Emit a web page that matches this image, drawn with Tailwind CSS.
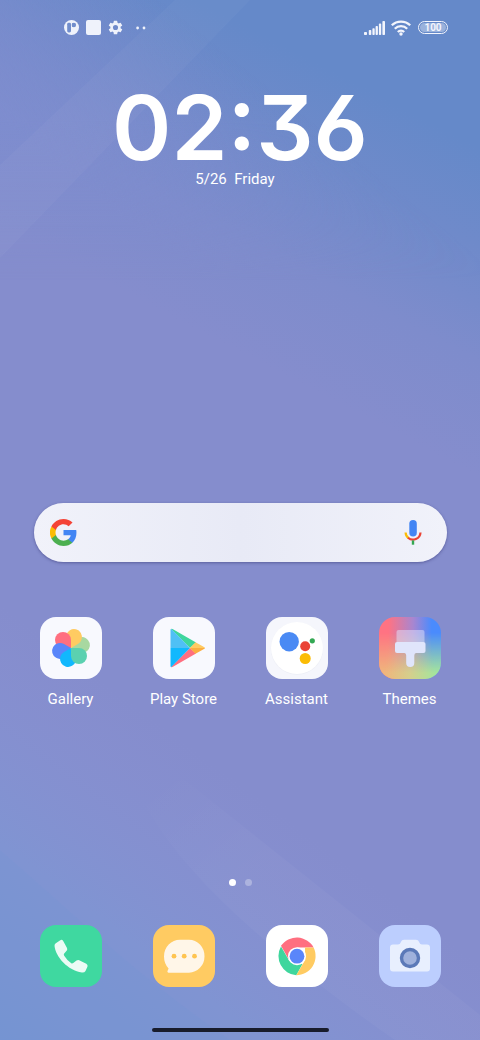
<!DOCTYPE html>
<html lang="en">
<head>
  <meta charset="UTF-8">
  <meta name="viewport" content="width=device-width, initial-scale=1.0">
  <title>Home Screen</title>
  <script src="https://cdn.jsdelivr.net/npm/@tailwindcss/browser@4"></script>
</head>
<body class="bg-[#868dcf] font-['Roboto',sans-serif] text-white">
  <div class="relative isolate flex min-h-screen flex-col overflow-hidden">

    <!-- Wallpaper -->
    <svg class="absolute inset-0 -z-10 h-full w-full" viewBox="0 0 480 1040" preserveAspectRatio="none" aria-hidden="true">
      <defs>
        <linearGradient id="sky" gradientUnits="userSpaceOnUse" x1="370" y1="90" x2="235" y2="350">
          <stop offset="0" stop-color="#6589c9"/>
          <stop offset="0.3" stop-color="#6f8aca"/>
          <stop offset="0.65" stop-color="#7e8ccc"/>
          <stop offset="1" stop-color="#858dcd"/>
        </linearGradient>
        <linearGradient id="low" gradientUnits="userSpaceOnUse" x1="0" y1="1040" x2="210" y2="760">
          <stop offset="0" stop-color="#7794d2"/>
          <stop offset="0.45" stop-color="#8094d2"/>
          <stop offset="1" stop-color="#8991d3" stop-opacity="0"/>
        </linearGradient>
        <linearGradient id="corner" gradientUnits="userSpaceOnUse" x1="160" y1="0" x2="40" y2="150">
          <stop offset="0" stop-color="#7e8dcf" stop-opacity="0"/>
          <stop offset="1" stop-color="#7e8dcf"/>
        </linearGradient>
        <linearGradient id="cornerFade" gradientUnits="userSpaceOnUse" x1="0" y1="120" x2="0" y2="280">
          <stop offset="0" stop-color="#fff"/>
          <stop offset="1" stop-color="#000"/>
        </linearGradient>
        <mask id="cornerMask"><rect width="480" height="280" fill="url(#cornerFade)"/></mask>
        <linearGradient id="sheen" gradientUnits="userSpaceOnUse" x1="150" y1="780" x2="230" y2="880">
          <stop offset="0" stop-color="#fff" stop-opacity="0"/>
          <stop offset="1" stop-color="#fff" stop-opacity="0.03"/>
        </linearGradient>
      </defs>
      <rect width="480" height="1040" fill="url(#sky)"/>
      <rect width="480" height="1040" fill="url(#low)"/>
      <rect width="480" height="280" fill="url(#corner)" mask="url(#cornerMask)" fill-opacity="0.8"/>
      <path d="M0 165 175 0H250L0 258Z" fill="#fff" fill-opacity="0.03"/>
      <path d="M0 850C70 910 130 970 230 1040H0Z" fill="#6f94d2" fill-opacity="0.12"/>
      <path d="M135 780H185L480 1015V1040H395C280 960 160 860 135 780Z" fill="url(#sheen)"/>
    </svg>

    <!-- Status bar -->
    <header class="flex h-[55px] items-center justify-between pr-8 pl-16">
      <div class="flex items-center gap-[7px] text-[#eff2fb]">
        <svg class="size-[15px]" viewBox="0 0 15 15" aria-hidden="true">
          <circle cx="7.5" cy="7.5" r="7.5" fill="currentColor"/>
          <rect x="3.2" y="2.8" width="3.8" height="9.6" rx="1.4" fill="#718dcc"/>
          <circle cx="9.9" cy="5" r="2.2" fill="#718dcc"/>
          <path d="M8 3.2h1.500v3.600H8Z" fill="#718dcc"/>
        </svg>
        <span class="size-[15px] rounded-xs bg-[#eff2fb]"></span>
        <svg class="size-[15px]" viewBox="1.500 1.500 21 21" fill="currentColor" aria-hidden="true">
          <path d="M19.14 12.94c.04-.3.06-.61.06-.94s-.02-.64-.07-.94l2.03-1.58a.49.49 0 0 0 .12-.61l-1.92-3.32a.49.49 0 0 0-.59-.22l-2.39.96a7 7 0 0 0-1.62-.94l-.36-2.54A.48.48 0 0 0 13.92 2.4h-3.84a.48.48 0 0 0-.47.41l-.36 2.54a7 7 0 0 0-1.62.94l-2.39-.96a.48.48 0 0 0-.59.22L2.74 8.87a.47.47 0 0 0 .12.61l2.03 1.58a6 6 0 0 0 0 1.88l-2.03 1.58a.49.49 0 0 0-.12.61l1.92 3.32c.12.22.37.29.59.22l2.39-.96c.5.38 1.03.7 1.62.94l.36 2.54c.05.24.24.41.48.41h3.84c.24 0 .44-.17.47-.41l.36-2.54a7 7 0 0 0 1.62-.94l2.39.96c.22.08.47 0 .59-.22l1.92-3.32a.47.47 0 0 0-.12-.61ZM12 15.6a3.6 3.6 0 1 1 0-7.2 3.6 3.6 0 0 1 0 7.2Z"/>
        </svg>
        <svg class="ml-[6px] h-1 w-[10px]" viewBox="0 0 10 4" fill="currentColor" aria-hidden="true">
          <circle cx="1.6" cy="2" r="1.4"/>
          <circle cx="8" cy="2" r="1.4"/>
        </svg>
      </div>
      <div class="flex items-center gap-[6px] text-[#f3f5fc]">
        <svg class="h-[14px] w-[21px]" viewBox="0 0 21 14" fill="currentColor" aria-label="Signal">
          <rect x="0" y="11" width="3" height="3" rx="0.8"/>
          <rect x="4.800" y="9" width="2.500" height="5" rx="0.8"/>
          <rect x="8.4" y="7.200" width="2.300" height="6.800" rx="0.8"/>
          <rect x="11.600" y="5" width="2.300" height="9" rx="0.8"/>
          <rect x="14.900" y="2.6" width="2.300" height="11.4" rx="0.8"/>
          <rect x="18.400" y="0" width="2.600" height="14" rx="0.8"/>
        </svg>
        <svg class="h-4 w-5" viewBox="0 0 20 16" fill="none" stroke="currentColor" stroke-width="2.3" aria-label="Wi-Fi">
          <path d="M0.8 5.300a13.2 13.2 0 0 1 18.4 0"/>
          <path d="M3.800 8.700a8.8 8.8 0 0 1 12.4 0"/>
          <path d="M6.800 12a4.600 4.600 0 0 1 6.4 0"/>
          <circle cx="10" cy="14" r="1.7" fill="currentColor" stroke="none"/>
        </svg>
        <div class="ml-px flex h-[13px] w-[30px] rounded-full border border-[#f3f5fc] p-px">
          <span class="flex-1 rounded-full bg-white/35 text-center text-[10px] leading-[10px] font-bold">100</span>
        </div>
      </div>
    </header>

    <!-- Clock -->
    <section class="flex flex-col items-center pt-9">
      <time class="font-['Inter',sans-serif] text-[90px] leading-[74px] font-semibold [font-feature-settings:'cv09','cv03','cv06']">02:36</time>
      <p class="mt-1 pr-[10px] text-[15px] leading-5 whitespace-pre">5/26  Friday</p>
    </section>

    <div class="min-h-10 flex-1"></div>

    <!-- Search -->
    <form class="mr-[33px] ml-[34px] flex h-[59px] items-center rounded-full bg-linear-to-r from-[#f1f2fa] via-[#e8eaf6] to-[#f1f2fa] pr-5 pl-4 shadow-[0_1px_3px_rgba(50,50,110,0.5)]" onsubmit="return false">
      <button type="submit" aria-label="Google">
        <svg class="size-[27px]" viewBox="2 2 44 44">
          <path fill="#4285f4" d="M45.1 24.5c0-1.6-.1-3.100-.4-4.500H24v8.500h11.800c-.5 2.800-2.100 5.100-4.400 6.700v5.500h7.100c4.200-3.800 6.600-9.500 6.600-16.200Z"/>
          <path fill="#4caf50" d="M24 46c5.900 0 10.900-2 14.500-5.300l-7.100-5.500c-2 1.300-4.500 2.100-7.400 2.100-5.700 0-10.500-3.900-12.300-9.100H4.300v5.700C8 41.100 15.400 46 24 46Z"/>
          <path fill="#fbbc05" d="M11.700 28.200c-.4-1.300-.7-2.700-.7-4.200s.2-2.900.7-4.200v-5.700H4.300a22 22 0 0 0 0 19.800Z"/>
          <path fill="#f44336" d="M24 10.700c3.200 0 6.100 1.100 8.400 3.300l6.300-6.300C34.900 4.200 29.900 2 24 2 15.400 2 8 6.900 4.300 14.100l7.400 5.700c1.800-5.200 6.600-9.100 12.300-9.100Z"/>
        </svg>
      </button>
      <input type="search" aria-label="Search" class="min-w-0 flex-1 bg-transparent px-3 text-base text-gray-700 outline-none">
      <button type="button" aria-label="Voice search">
        <svg class="h-[27px] w-7" viewBox="0 0 28 27" fill="none">
          <rect x="10.300" y="1" width="7.500" height="16.500" rx="3.750" fill="#4285f4"/>
          <path d="M6.600 13.500a7.500 7.500 0 0 0 3 5.700" stroke="#fbbc05" stroke-width="2.200"/>
          <path d="M9 18.700a7.500 7.500 0 0 0 12.500-5.200" stroke="#ea4335" stroke-width="2.200"/>
          <path d="M14 21.400v4.300" stroke="#34a853" stroke-width="2.400"/>
        </svg>
      </button>
    </form>

    <!-- Apps -->
    <nav class="mt-[55px] grid grid-cols-4 px-[14px] text-[15px] leading-5" aria-label="Apps">
      <a href="#" class="flex flex-col items-center gap-[10px]">
        <svg class="size-[62px]" viewBox="0 0 62 62" aria-hidden="true">
          <rect width="62" height="62" rx="16" fill="#f8f9fe"/>
          <path id="petal" fill="#a8d8a0" transform="rotate(-60 31 31)" d="M31 31H39A8 8 0 1 1 31 39Z"/>
          <path fill="#ffcb62" transform="rotate(-120 31 31)" d="M31 31H39A8 8 0 1 1 31 39Z"/>
          <path fill="#ff6f80" transform="rotate(180 31 31)" d="M31 31H39A8 8 0 1 1 31 39Z"/>
          <path fill="#5a86fa" transform="rotate(120 31 31)" d="M31 31H39A8 8 0 1 1 31 39Z"/>
          <path fill="#11b8fd" transform="rotate(60 31 31)" d="M31 31H39A8 8 0 1 1 31 39Z"/>
          <path fill="#5bd1b0" d="M31 31H39A8 8 0 1 1 31 39Z"/>
        </svg>
        <span>Gallery</span>
      </a>
      <a href="#" class="flex flex-col items-center gap-[10px]">
        <svg class="size-[62px]" viewBox="0 0 62 62" aria-hidden="true">
          <rect width="62" height="62" rx="16" fill="#f8f9fe"/>
          <path fill="#3fd69d" d="M18 12Q19 11.500 20 12.300L43 25.500 37 31Z"/>
          <path fill="#ff6f80" d="M18 50Q19 50.500 20 49.700L43 36.500 37 31Z"/>
          <path fill="#ffcb62" d="M42.500 25.300 51 30Q52 30.500 52 31H36.800Z"/>
          <path fill="#fcae40" d="M42.500 36.700 51 32Q52 31.500 52 31H36.800Z"/>
          <path fill="#4fc0f5" d="M17.500 13Q17.500 11.500 18.600 12.300L37 31H17.500Z"/>
          <path fill="#11b8fd" d="M17.500 49Q17.500 50.500 18.600 49.700L37 31H17.500Z"/>
        </svg>
        <span>Play Store</span>
      </a>
      <a href="#" class="flex flex-col items-center gap-[10px]">
        <svg class="size-[62px]" viewBox="0 0 62 62" aria-hidden="true">
          <rect width="62" height="62" rx="16" fill="#f5f6fc"/>
          <circle cx="31" cy="31.500" r="26.200" fill="#eceef5"/>
          <circle cx="31" cy="31" r="26" fill="#fff"/>
          <circle cx="23.200" cy="24.700" r="9.700" fill="#4a8af4"/>
          <circle cx="39.200" cy="29.300" r="5" fill="#ea4335"/>
          <circle cx="39.200" cy="41.500" r="5.500" fill="#fbbc05"/>
          <circle cx="46.300" cy="23.800" r="2.600" fill="#34a853"/>
        </svg>
        <span>Assistant</span>
      </a>
      <a href="#" class="flex flex-col items-center gap-[10px]">
        <svg class="size-[62px]" viewBox="0 0 62 62" aria-hidden="true">
          <defs>
            <linearGradient id="warmCool">
              <stop offset="0.150" stop-color="#ff7383"/>
              <stop offset="0.550" stop-color="#a886d0"/>
              <stop offset="0.850" stop-color="#4a8bfd"/>
            </linearGradient>
            <linearGradient id="sandLime">
              <stop offset="0.100" stop-color="#efb67c"/>
              <stop offset="0.500" stop-color="#d5cf8c"/>
              <stop offset="0.900" stop-color="#a5e59c"/>
            </linearGradient>
            <linearGradient id="fade" x1="0" y1="0" x2="0" y2="1">
              <stop offset="0.250" stop-color="#000"/>
              <stop offset="0.900" stop-color="#fff"/>
            </linearGradient>
            <mask id="fadeMask"><rect width="62" height="62" fill="url(#fade)"/></mask>
          </defs>
          <rect width="62" height="62" rx="16" fill="url(#warmCool)"/>
          <rect width="62" height="62" rx="16" fill="url(#sandLime)" mask="url(#fadeMask)"/>
          <path fill="#e0e4fb" fill-opacity="0.500" d="M17.500 15a2 2 0 0 1 2-2h24a2 2 0 0 1 2 2v10h-28Z"/>
          <rect x="16" y="25" width="30.500" height="11" rx="2" fill="#e0e5fb"/>
          <path fill="#e0e5fb" d="M25.500 36h11.500q-1.700.3-1.700 2.500V46a4 4 0 0 1-8.100 0V38.500q0-2.200-1.700-2.500Z"/>
        </svg>
        <span>Themes</span>
      </a>
    </nav>

    <!-- Page dots -->
    <div class="mt-[170px] flex justify-center gap-[9px]">
      <span class="size-[7px] rounded-full bg-white"></span>
      <span class="size-[7px] rounded-full bg-white/30"></span>
    </div>

    <!-- Dock -->
    <nav class="mt-[39px] grid grid-cols-4 px-[14px]" aria-label="Dock">
      <a href="#" aria-label="Phone" class="flex justify-center">
        <svg class="size-[62px]" viewBox="0 0 62 62">
          <rect width="62" height="62" rx="16" fill="#3fd8a0"/>
          <path fill="#ebfbf5" d="M15.800 18.200 20.300 15.200Q22 14.200 23.200 16L27 23Q27.600 24.500 26.800 25.500L24 28.800Q23.500 29.800 24.200 30.800 27 35.500 31.300 38.200 32.300 38.700 33.300 37.900L36.500 35.500Q37.800 34.700 39.200 35.200L46.300 38.800Q48 40 47.500 41.500L45.500 46Q44.500 47.800 42 47.600C28 45.500 15.500 32 14.500 20.800Q14.500 19 15.800 18.200Z"/>
        </svg>
      </a>
      <a href="#" aria-label="Messages" class="flex justify-center">
        <svg class="size-[62px]" viewBox="0 0 62 62">
          <rect width="62" height="62" rx="16" fill="#ffcb62"/>
          <path fill="#fff6e8" d="M27 14.700H36A15.500 16.500 0 0 1 36 47.700H15.500Q13.700 47.500 14.600 45.800L15.600 43.600Q11 38.500 11 31.500A16 16.800 0 0 1 27 14.700Z"/>
          <circle cx="21" cy="31.200" r="2.400" fill="#ffc450"/>
          <circle cx="31.200" cy="31.200" r="2.400" fill="#ffc450"/>
          <circle cx="41.500" cy="31.200" r="2.400" fill="#ffc450"/>
        </svg>
      </a>
      <a href="#" aria-label="Chrome" class="flex justify-center">
        <svg class="size-[62px]" viewBox="0 0 62 62">
          <rect width="62" height="62" rx="16" fill="#fff"/>
          <path fill="#ff6f80" d="M15 20.800A19.200 19.200 0 0 1 47.600 22.500H31L22.500 34Z"/>
          <path fill="#3fd69d" d="M15 21.500 23.400 36 36.500 39 30.300 50.200A19.200 19.200 0 0 1 15 21.500Z"/>
          <path fill="#ffcb62" d="M47.600 22.500A19.200 19.200 0 0 1 30.300 50.200L39 35V22.500Z"/>
          <circle cx="31" cy="31.200" r="9" fill="#fff"/>
          <circle cx="31" cy="31.200" r="7.400" fill="#5a86fa"/>
        </svg>
      </a>
      <a href="#" aria-label="Camera" class="flex justify-center">
        <svg class="size-[62px]" viewBox="0 0 62 62">
          <rect width="62" height="62" rx="16" fill="#bccefe"/>
          <path fill="#e8effe" d="M14 19.500H19Q21 19.500 21.700 17.500L22 16.700Q22.700 14.700 25 14.700H37Q39.300 14.700 40 16.700L40.300 17.500Q41 19.500 43 19.500H48Q51 19.500 51 22.500V43.500Q51 46.500 48 46.500H14Q11 46.500 11 43.500V22.500Q11 19.500 14 19.500Z"/>
          <circle cx="31" cy="33" r="8.500" fill="#9fb1dc" stroke="#5b79b8" stroke-width="3.400"/>
        </svg>
      </a>
    </nav>

    <!-- Home indicator -->
    <div class="mt-[41px] mb-2 flex justify-center">
      <span class="h-1 w-[177px] rounded-full bg-[#181c2c]"></span>
    </div>
  </div>
</body>
</html>
